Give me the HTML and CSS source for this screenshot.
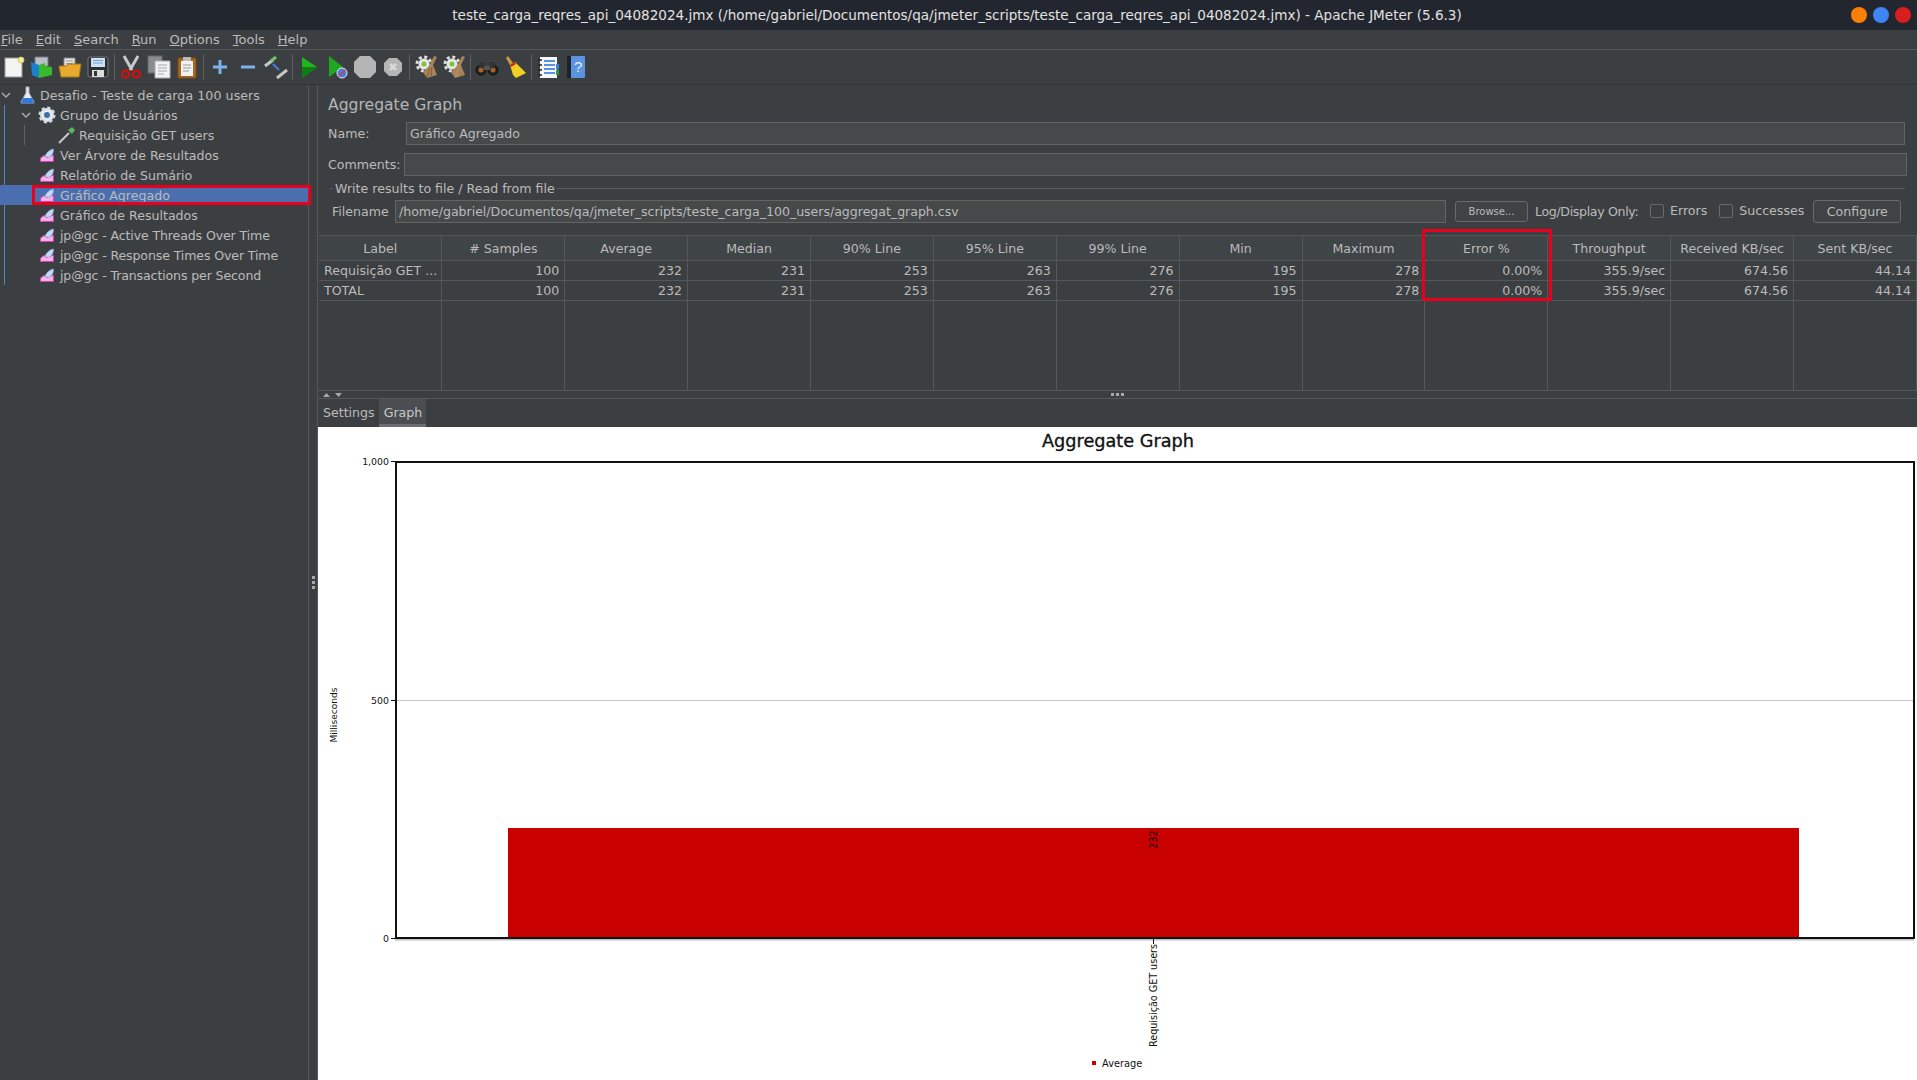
FILE: index.html
```html
<!DOCTYPE html>
<html lang="pt">
<head>
  <meta charset="utf-8">
  <title>Apache JMeter (5.6.3)</title>
  <link rel="stylesheet" href="styles.css">
</head>
<body>
  <svg class="defs" width="0" height="0">
    <symbol id="i-graph" viewBox="0 0 14 14">
      <path d="M.5 13.500V10L4 7.500L7 9.500L13.500 7V13.500Z" fill="#f6b4e4" stroke="#d63fb0"/>
      <path d="M5 8.500C6 5 9.500 1.500 13.500 1C13.500 5 12 8.500 8 9.500Z" fill="#c3d8f5" stroke="#82a8dc" stroke-width=".7"/>
    </symbol>
    <symbol id="i-gearbroom" viewBox="0 0 24 24">
      <circle cx="10" cy="9" r="5.500" fill="#e6e6e6"/>
      <circle cx="10" cy="9" r="7" fill="none" stroke="#dcdcdc" stroke-width="3" stroke-dasharray="3 2.500"/>
      <circle cx="10" cy="9" r="2.500" fill="#7cc63a"/>
      <path d="M20 1L23 2L19 10L23 20L13 23L9 17L15 11Z" fill="#a98358"/>
      <path d="M13 22L16 13M17 21L18 12" stroke="#7d5c38" fill="none"/>
    </symbol>
  </svg>

  <div class="titlebar">
    <span class="title-text">teste_carga_reqres_api_04082024.jmx (/home/gabriel/Documentos/qa/jmeter_scripts/teste_carga_reqres_api_04082024.jmx) - Apache JMeter (5.6.3)</span>
    <div class="win-btns">
      <span class="dot dot-orange"></span>
      <span class="dot dot-blue"></span>
      <span class="dot dot-red"></span>
    </div>
  </div>

  <div class="menubar">
    <span><u>F</u>ile</span>
    <span><u>E</u>dit</span>
    <span><u>S</u>earch</span>
    <span><u>R</u>un</span>
    <span><u>O</u>ptions</span>
    <span><u>T</u>ools</span>
    <span><u>H</u>elp</span>
  </div>

  <div class="toolbar">
    <span class="tool"><svg viewBox="0 0 24 24"><rect x="3" y="3" width="17" height="19" fill="#f4f4f2" stroke="#999"/><circle cx="19" cy="5" r="3" fill="#f4e9a0" stroke="#d8c860"/></svg></span>
    <span class="tool"><svg viewBox="0 0 24 24"><path d="M5 2h13v9H5z" fill="#b8c0c8" stroke="#778"/><path d="M1 7l8 3v13l-7-3z" fill="#1b7fd0"/><path d="M9 10l6-2v3l7 1v8l-13 3z" fill="#39b92c"/></svg></span>
    <span class="tool"><svg viewBox="0 0 24 24"><path d="M6 3h11v9H6z" fill="#e4e4e4" stroke="#888"/><path d="M8 6h7M8 8.500h7" stroke="#999"/><path d="M1 11h7l2-2h13l-2 13H3z" fill="#e8a92c" stroke="#a9761a"/></svg></span>
    <span class="tool"><svg viewBox="0 0 24 24"><rect x="2" y="2" width="20" height="20" rx="2" fill="#2c2f33" stroke="#777"/><rect x="5" y="3" width="14" height="9" fill="#cfe0f4"/><path d="M7 5.500h10M7 8h10" stroke="#7aa0cc"/><rect x="6" y="15" width="12" height="7" fill="#ddd"/><rect x="8" y="16" width="3" height="5" fill="#333"/></svg></span>
    <span class="sep"></span>
    <span class="tool"><svg viewBox="0 0 24 24"><path d="M5 1L13 15M19 1L11 15" stroke="#c8c8c8" stroke-width="3" fill="none"/><circle cx="6.500" cy="19" r="3.500" fill="none" stroke="#cc1010" stroke-width="2.500"/><circle cx="17.500" cy="19" r="3.500" fill="none" stroke="#cc1010" stroke-width="2.500"/></svg></span>
    <span class="tool"><svg viewBox="0 0 24 24"><rect x="1" y="1" width="14" height="17" fill="#8a8d90" stroke="#666"/><path d="M8 6h15v17H8z" fill="#f2f2f2" stroke="#aaa"/><path d="M11 10h9M11 13h9M11 16h9M11 19h6" stroke="#aaa"/></svg></span>
    <span class="tool"><svg viewBox="0 0 24 24"><rect x="3" y="3" width="18" height="20" rx="1" fill="#a9681f" stroke="#7a4a12"/><rect x="6" y="6" width="12" height="15" fill="#f2f2f2"/><rect x="8" y="2" width="8" height="4" fill="#bbb"/><path d="M8 10h8M8 13h8M8 16h6" stroke="#999"/></svg></span>
    <span class="sep"></span>
    <span class="tool"><svg viewBox="0 0 24 24"><path d="M12 5v14M5 12h14" stroke="#7fb2ea" stroke-width="3"/></svg></span>
    <span class="tool"><svg viewBox="0 0 24 24"><path d="M5 12h14" stroke="#7fb2ea" stroke-width="3"/></svg></span>
    <span class="tool"><svg viewBox="0 0 24 24"><path d="M1 11L9 5" stroke="#c6c6c6" stroke-width="3"/><path d="M7 6l5-4" stroke="#6fc46f" stroke-width="3"/><path d="M9 9l6 6" stroke="#3a82e0" stroke-width="2"/><path d="M13 23l10-8" stroke="#c6c6c6" stroke-width="3"/></svg></span>
    <span class="sep"></span>
    <span class="tool"><svg viewBox="0 0 24 24"><path d="M5 2L20 12L5 23Z" fill="#1fb51f"/><path d="M5 12H20L5 23Z" fill="#0c7f12"/></svg></span>
    <span class="tool"><svg viewBox="0 0 24 24"><path d="M4 1L18 12L4 22Z" fill="#1fa71f"/><circle cx="17" cy="18" r="5" fill="#3f7fe0" stroke="#eee"/><path d="M14 21l6-6" stroke="#e33" stroke-width="1.500"/></svg></span>
    <span class="tool"><svg viewBox="0 0 24 24"><path d="M7 1h10l6 6v10l-6 6H7l-6-6V7z" fill="#b5b5b5"/></svg></span>
    <span class="tool"><svg viewBox="0 0 24 24"><path d="M8 3h8l5 5v8l-5 5H8l-5-5V8z" fill="#b5b5b5"/><path d="M9 9l6 6M15 9l-6 6" stroke="#d8d8d8" stroke-width="2.500"/></svg></span>
    <span class="sep"></span>
    <span class="tool"><svg viewBox="0 0 24 24"><use href="#i-gearbroom"/></svg></span>
    <span class="tool"><svg viewBox="0 0 24 24"><use href="#i-gearbroom"/><path d="M12 22L16 8L19 9L17 22Z" fill="#b08a5e"/></svg></span>
    <span class="sep"></span>
    <span class="tool"><svg viewBox="0 0 24 24"><circle cx="6" cy="15" r="5" fill="#222" stroke="#111"/><circle cx="18" cy="15" r="5" fill="#222" stroke="#111"/><circle cx="6" cy="15" r="2.500" fill="#a5622c"/><circle cx="18" cy="15" r="2.500" fill="#a5622c"/><rect x="4" y="7" width="6" height="6" fill="#333"/><rect x="14" y="7" width="6" height="6" fill="#333"/><rect x="9" y="11" width="6" height="4" fill="#555"/></svg></span>
    <span class="tool"><svg viewBox="0 0 24 24"><path d="M5 1l5 7-3 2-4-7z" fill="#c79a3e"/><path d="M7 10l5-3 11 11-10 5-3-3z" fill="#f0d020"/><path d="M7 10l5-3 1 2-5 3z" fill="#d42020"/></svg></span>
    <span class="sep"></span>
    <span class="tool"><svg viewBox="0 0 24 24"><rect x="4" y="2" width="17" height="21" fill="#f6f6f6"/><path d="M8 6h11M8 10h11M8 14h11M8 18h11" stroke="#2a70d8" stroke-width="1.500"/><path d="M2 5h4M2 10h4M2 15h4M2 20h4" stroke="#222" stroke-width="1.500"/><rect x="20" y="9" width="3" height="5" fill="#3a80d0"/><rect x="20" y="15" width="3" height="5" fill="#2a9a3a"/></svg></span>
    <span class="tool"><svg viewBox="0 0 24 24"><rect x="3" y="1" width="18" height="22" rx="1" fill="#5a93de"/><rect x="3" y="1" width="4" height="22" fill="#1d2228"/><text x="10" y="17" class="help-q">?</text></svg></span>
  </div>

  <div class="workspace">
    <div class="tree">
      <div class="tree-guide guide-a"></div>
      <div class="tree-guide guide-b"></div>
      <div class="row lv0">
        <svg class="chev" viewBox="0 0 10 10"><path d="M1 3l4 4 4-4" fill="none" stroke="#aaa" stroke-width="1.500"/></svg>
        <svg class="ico" viewBox="0 0 18 18"><path d="M7 1h3v6l5 9v1H2v-1l5-9z" fill="#e8eef5" stroke="#aab"/><path d="M4 12h9l2 5H2z" fill="#2a7de0"/></svg>
        <span>Desafio - Teste de carga 100 users</span>
      </div>
      <div class="row lv1">
        <svg class="chev" viewBox="0 0 10 10"><path d="M1 3l4 4 4-4" fill="none" stroke="#aaa" stroke-width="1.500"/></svg>
        <svg class="ico" viewBox="0 0 18 18"><circle cx="9" cy="9" r="7" fill="#dfe3e8" stroke="#d6dae0" stroke-width="3" stroke-dasharray="3 2.500"/><circle cx="9" cy="9" r="5" fill="#e8ebef"/><circle cx="9" cy="9" r="3" fill="#3d6ea8"/></svg>
        <span>Grupo de Usuários</span>
      </div>
      <div class="row lv2">
        <svg class="ico" viewBox="0 0 18 18"><path d="M1 17L11 7" stroke="#c8c8c8" stroke-width="2"/><path d="M10 4l4 4 3-4-3-3z" fill="#5cb85c"/></svg>
        <span>Requisição GET users</span>
      </div>
      <div class="row lv3"><svg class="gr"><use href="#i-graph"/></svg><span>Ver Árvore de Resultados</span></div>
      <div class="row lv3"><svg class="gr"><use href="#i-graph"/></svg><span>Relatório de Sumário</span></div>
      <div class="row lv3 selected"><svg class="gr"><use href="#i-graph"/></svg><span>Gráfico Agregado</span><div class="mark mark-tree"></div></div>
      <div class="row lv3"><svg class="gr"><use href="#i-graph"/></svg><span>Gráfico de Resultados</span></div>
      <div class="row lv3 jp"><svg class="gr"><use href="#i-graph"/></svg><span>jp@gc - Active Threads Over Time</span></div>
      <div class="row lv3 jp"><svg class="gr"><use href="#i-graph"/></svg><span>jp@gc - Response Times Over Time</span></div>
      <div class="row lv3 jp"><svg class="gr"><use href="#i-graph"/></svg><span>jp@gc - Transactions per Second</span></div>
    </div>

    <div class="split-v"><span class="grip"></span></div>

    <div class="panel">
      <div class="form">
        <div class="heading">Aggregate Graph</div>
        <div class="form-row name-row">
          <label>Name:</label>
          <div class="field">Gráfico Agregado</div>
        </div>
        <div class="form-row comments-row">
          <label>Comments:</label>
          <div class="field"></div>
        </div>
        <div class="legend"><span>Write results to file / Read from file</span></div>
        <div class="form-row file-row">
          <label>Filename</label>
          <div class="field">/home/gabriel/Documentos/qa/jmeter_scripts/teste_carga_100_users/aggregat_graph.csv</div>
          <div class="btn btn-small">Browse...</div>
          <span class="log-label">Log/Display Only:</span>
          <span class="check"></span><span class="check-label">Errors</span>
          <span class="check"></span><span class="check-label">Successes</span>
          <div class="btn btn-conf">Configure</div>
        </div>
      </div>

      <div class="table-wrap">
        <table class="results">
          <thead>
            <tr><th>Label</th><th># Samples</th><th>Average</th><th>Median</th><th>90% Line</th><th>95% Line</th><th>99% Line</th><th>Min</th><th>Maximum</th><th>Error %</th><th>Throughput</th><th>Received KB/sec</th><th>Sent KB/sec</th></tr>
          </thead>
          <tbody>
            <tr><td>Requisição GET ...</td><td>100</td><td>232</td><td>231</td><td>253</td><td>263</td><td>276</td><td>195</td><td>278</td><td>0.00%</td><td>355.9/sec</td><td>674.56</td><td>44.14</td></tr>
            <tr><td>TOTAL</td><td>100</td><td>232</td><td>231</td><td>253</td><td>263</td><td>276</td><td>195</td><td>278</td><td>0.00%</td><td>355.9/sec</td><td>674.56</td><td>44.14</td></tr>
            <tr class="empty"><td></td><td></td><td></td><td></td><td></td><td></td><td></td><td></td><td></td><td></td><td></td><td></td><td></td></tr>
          </tbody>
        </table>
        <div class="mark mark-col"></div>
      </div>

      <div class="split-h">
        <svg class="arrows" width="22" height="6" viewBox="0 0 22 6"><path d="M1 5L4.500 1L8 5Z M13 1L20 1L16.500 5Z" fill="#a5a8aa"/></svg>
        <span class="grip-h"></span>
      </div>

      <div class="tabs">
        <span class="tab">Settings</span>
        <span class="tab tab-on">Graph</span>
      </div>

      <svg class="chart" viewBox="0 0 1599 653" width="1599" height="653">
        <text x="800" y="20" class="chart-title">Aggregate Graph</text>
        <rect x="190" y="401" width="1291" height="110" fill="#c90000"/>
        <line x1="77" y1="273.500" x2="1596" y2="273.500" stroke="#c6c6c6"/>
        <line x1="77" y1="512.500" x2="1596" y2="512.500" stroke="#c0c0c0" stroke-width="2"/>
        <rect x="78" y="35" width="1518" height="476" fill="none" stroke="#111" stroke-width="2"/>
        <path d="M73 34.500h4M73 273.500h4M73 511.500h4M835.500 512v5" stroke="#111"/>
        <text x="71" y="38" class="tick">1,000</text>
        <text x="71" y="277" class="tick">500</text>
        <text x="71" y="515" class="tick">0</text>
        <text transform="translate(19 288) rotate(-90)" class="axis">Milliseconds</text>
        <text transform="translate(839 422) rotate(-90)" class="cat">232</text>
        <text transform="translate(839 620) rotate(-90)" class="cat cat-long">Requisição GET users</text>
        <rect x="774" y="634" width="4" height="4" fill="#c90000"/>
        <text x="784" y="640" class="cat">Average</text>
      </svg>
    </div>
  </div>
</body>
</html>
```

FILE: styles.css
```css
* {
  box-sizing: border-box;
}
html, body {
  height: 100%;
}
body {
  margin: 0;
  width: 1917px;
  height: 1080px;
  overflow: hidden;
  display: flex;
  flex-direction: column;
  background: #3c3f41;
  color: #bbbbbb;
  font-family: "DejaVu Sans", sans-serif;
  font-size: 12.6px;
}
.defs {
  position: absolute;
}
.titlebar {
  height: 30px;
  flex: none;
  background: #22262e;
  color: #e2e2e2;
  display: flex;
  align-items: center;
  justify-content: center;
  position: relative;
  font-size: 13.55px;
  padding-right: 3px;
}
.win-btns {
  position: absolute;
  right: 6px;
  top: 7px;
  display: flex;
  gap: 6px;
}
.dot {
  width: 16px;
  height: 16px;
  border-radius: 50%;
}
.dot-orange { background: #ff8000; }
.dot-blue { background: #3f84f4; }
.dot-red { background: #d81e1e; }

.menubar {
  height: 19px;
  flex: none;
  display: flex;
  align-items: center;
  gap: 13px;
  padding-left: 1px;
  font-size: 13px;
}
.toolbar {
  height: 36px;
  flex: none;
  display: flex;
  align-items: center;
  padding-bottom: 1px;
  border-top: 1px solid #55585a;
  border-bottom: 1px solid #323436;
}
.tool {
  width: 28px;
  height: 26px;
  flex: none;
  display: flex;
  align-items: center;
  justify-content: center;
}
.tool svg {
  width: 24px;
  height: 24px;
}
.help-q {
  font-family: "Liberation Sans", sans-serif;
  font-size: 15px;
  fill: #e8f0fa;
}
.sep {
  width: 5px;
  height: 26px;
  flex: none;
  background: linear-gradient(#5c5f61, #5c5f61) 2px 0 / 1px 100% no-repeat;
}

.workspace {
  flex: 1;
  display: flex;
  min-height: 0;
}
.tree {
  width: 308px;
  flex: none;
  position: relative;
}
.tree-guide {
  position: absolute;
  border-left: 1px solid #5f6366;
}
.guide-a {
  left: 4px;
  top: 20px;
  height: 180px;
  border-color: #4f89c5;
}
.guide-b {
  left: 24px;
  top: 40px;
  height: 20px;
}
.row {
  height: 20px;
  display: flex;
  align-items: center;
  position: relative;
  white-space: nowrap;
}
.lv0 { padding-left: 1px; letter-spacing: 0.07px; }
.lv1 { padding-left: 21px; letter-spacing: 0.05px; }
.lv2 { padding-left: 58px; }
.lv3 { padding-left: 40px; }
.jp { letter-spacing: -0.14px; }
.chev {
  width: 10px;
  height: 10px;
  margin-right: 8px;
  flex: none;
}
.lv0 .chev { margin-right: 8px; }
.lv1 .chev { margin-right: 7px; }
.ico {
  width: 18px;
  height: 18px;
  margin-right: 3px;
  flex: none;
}
.lv1 .ico { margin-right: 4px; }
.gr {
  width: 14px;
  height: 14px;
  margin-right: 6px;
  flex: none;
}
.selected {
  background: #4b6eaf;
}
.mark {
  position: absolute;
  border: 3px solid #e8001c;
  pointer-events: none;
}
.mark-tree {
  left: 32px;
  top: 0;
  width: 279px;
  height: 20px;
}
.split-v {
  width: 10px;
  flex: none;
  border-left: 1px solid #55585a;
  border-right: 1px solid #55585a;
  display: flex;
  align-items: center;
  justify-content: center;
}
.grip {
  width: 3px;
  height: 13px;
  background: repeating-linear-gradient(to bottom, #a9a9a9 0 3px, transparent 3px 5px);
}

.panel {
  flex: 1;
  min-width: 0;
  display: flex;
  flex-direction: column;
}
.form {
  height: 150px;
  flex: none;
  padding-top: 11px;
}
.heading {
  height: 21px;
  font-size: 15.6px;
  padding-left: 10px;
  color: #b4b6b8;
}
.form-row {
  display: flex;
  align-items: center;
}
.form-row label {
  flex: none;
}
.field {
  flex: 1;
  min-width: 0;
  height: 23px;
  line-height: 21px;
  background: #45494a;
  border: 1px solid #646464;
  padding-left: 3px;
  white-space: nowrap;
}
.name-row {
  margin-top: 5px;
  padding: 0 12px 0 10px;
}
.name-row label {
  width: 78px;
}
.comments-row {
  margin-top: 8px;
  padding: 0 10px 0 10px;
}
.comments-row label {
  width: 76px;
}
.legend {
  margin-top: 2px;
  height: 20px;
  padding: 0 12px 0 12px;
  display: flex;
  align-items: center;
  gap: 2px;
}
.legend::before {
  content: "";
  width: 3px;
  border-top: 1px solid #5c5f61;
}
.legend::after {
  content: "";
  flex: 1;
  border-top: 1px solid #5c5f61;
}
.file-row {
  margin-top: 2px;
  padding-left: 14px;
}
.file-row label {
  width: 63px;
}
.file-row .field {
  flex: none;
  width: 1051px;
  letter-spacing: -0.04px;
}
.btn {
  border: 1px solid #686b6d;
  border-radius: 3px;
  background: #3f4345;
  text-align: center;
  flex: none;
}
.btn-small {
  width: 73px;
  height: 21px;
  line-height: 19px;
  font-size: 10px;
  margin-left: 9px;
}
.log-label {
  margin-left: 7px;
  width: 115px;
  flex: none;
  letter-spacing: -0.35px;
}
.check {
  width: 14px;
  height: 14px;
  border: 1px solid #686b6d;
  border-radius: 2px;
  flex: none;
  margin-top: -2px;
}
.check-label {
  margin: -2px 0 0 6px;
  flex: none;
}
.check-label + .check {
  margin-left: 12px;
}
.btn-conf {
  width: 88px;
  height: 23px;
  line-height: 21px;
  margin-left: 9px;
}

.table-wrap {
  position: relative;
  height: 155px;
  flex: none;
}
.results {
  width: 1598px;
  height: 155px;
  margin-left: 1px;
  table-layout: fixed;
  border-collapse: collapse;
}
.results th {
  height: 25px;
  font-weight: normal;
  background: #3f4447;
  border: 1px solid #55585a;
  border-width: 1px 1px 1px 0;
  padding: 0;
}
.results td {
  height: 20px;
  padding: 0 5px;
  text-align: right;
  white-space: nowrap;
  overflow: hidden;
  border-right: 1px solid #55585a;
  border-bottom: 1px solid #55585a;
}
.results td:first-child {
  text-align: left;
}
.results .empty td {
  height: 90px;
  border-bottom: none;
}
.mark-col {
  left: 1104px;
  top: -6px;
  width: 130px;
  height: 72px;
}
.split-h {
  height: 9px;
  flex: none;
  border-top: 1px solid #55585a;
  border-bottom: 1px solid #55585a;
  display: flex;
  align-items: center;
  position: relative;
  padding-left: 4px;
}
.grip-h {
  position: absolute;
  left: 793px;
  top: 2px;
  width: 13px;
  height: 3px;
  background: repeating-linear-gradient(to right, #a9a9a9 0 3px, transparent 3px 5px);
}
.tabs {
  height: 28px;
  flex: none;
  display: flex;
}
.tab {
  padding: 0 4px 0 5px;
  line-height: 28px;
  height: 28px;
}
.tab-on {
  background: #4a4e51;
  border-bottom: 3px solid #6a6e72;
  color: #c8c8c8;
}
.chart {
  display: block;
  background: #fff;
  flex: none;
}
.chart-title {
  font-family: "DejaVu Sans", sans-serif;
  font-size: 17.7px;
  text-anchor: middle;
  fill: #111;
  stroke: #111;
  stroke-width: 0.35;
}
.tick {
  font-family: "DejaVu Sans", sans-serif;
  font-size: 9.4px;
  fill: #111;
  text-anchor: end;
}
.axis {
  font-family: "DejaVu Sans", sans-serif;
  font-size: 9.1px;
  fill: #111;
  text-anchor: middle;
}
.cat {
  font-family: "DejaVu Sans", sans-serif;
  font-size: 9.8px;
  fill: #111;
}
.cat-long {
  font-size: 9.6px;
}
```
